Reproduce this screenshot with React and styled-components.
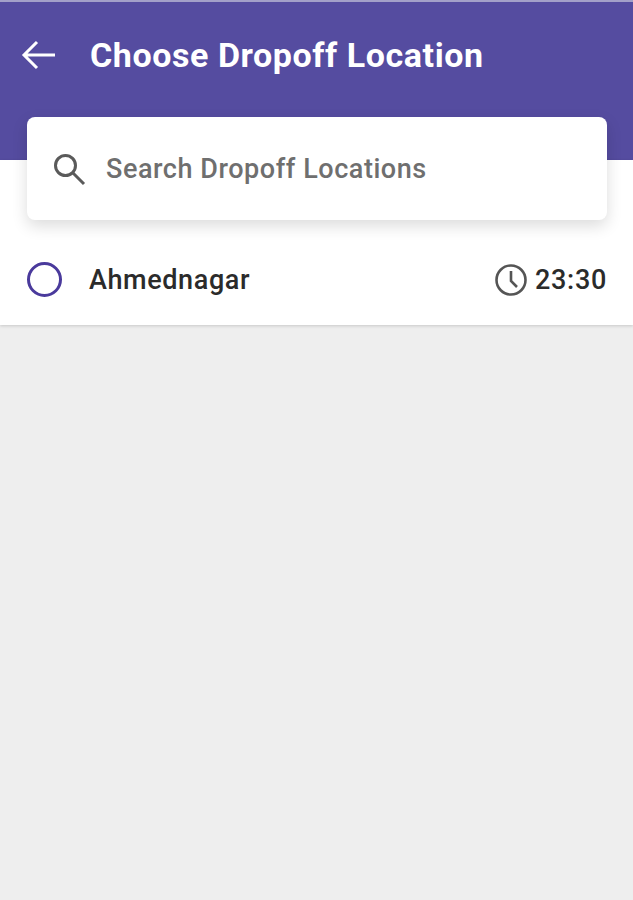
import React from 'react';
import styled, { createGlobalStyle } from 'styled-components';

const GlobalStyle = createGlobalStyle`
  html, body {
    margin: 0;
    padding: 0;
    background: #eeeeee;
    font-family: Roboto, "Liberation Sans", sans-serif;
  }
`;

const Page = styled.div`
  width: 633px;
  height: 900px;
  overflow: hidden;
  background: #eeeeee;
`;

const Header = styled.header`
  height: 158px;
  border-top: 2px solid #a3a0c9;
  background: #554ca0;
`;

const TitleRow = styled.div`
  display: flex;
  align-items: center;
  height: 106px;
  padding-left: 21px;
`;

const BackIcon = styled.svg`
  width: 36px;
  height: 32px;
  margin-right: 33px;
  flex: none;
`;

const Title = styled.h1`
  margin: 0;
  color: #ffffff;
  font-size: 34px;
  line-height: 40px;
  font-weight: 700;
  letter-spacing: 0.57px;
  white-space: nowrap;
`;

const Content = styled.section`
  display: flex;
  flex-direction: column;
  height: 165px;
  padding: 0 26px 0 27px;
  background: #ffffff;
  box-shadow: 0 1px 3px rgba(0, 0, 0, 0.16);
`;

const SearchCard = styled.div`
  display: flex;
  align-items: center;
  flex: none;
  height: 103px;
  margin-top: -43px;
  padding-left: 25px;
  background: #ffffff;
  border-radius: 8px;
  box-shadow: 0 6px 16px rgba(0, 0, 0, 0.14);
`;

const SearchIcon = styled.svg`
  width: 34px;
  height: 34px;
  margin-right: 20px;
  flex: none;
`;

const SearchText = styled.span`
  color: #6f6f6f;
  font-size: 27px;
  font-weight: 500;
  letter-spacing: 0.55px;
`;

const LocationRow = styled.div`
  display: flex;
  flex: 1;
  align-items: center;
  justify-content: space-between;
  padding-top: 14px;
`;

const Place = styled.div`
  display: flex;
  align-items: center;
  gap: 27px;
`;

const Radio = styled.span`
  width: 35px;
  height: 35px;
  box-sizing: border-box;
  border: 3px solid #4a3a9c;
  border-radius: 50%;
`;

const PlaceName = styled.span`
  color: #2b2b2b;
  font-size: 27px;
  font-weight: 500;
  letter-spacing: 0.6px;
`;

const Time = styled.div`
  display: flex;
  align-items: center;
  gap: 7px;
  color: #2b2b2b;
  font-size: 27px;
  font-weight: 500;
  letter-spacing: 0.7px;
`;

const ClockIcon = styled.svg`
  width: 34px;
  height: 34px;
  flex: none;
`;

export default function App() {
  return (
    <Page>
      <GlobalStyle />
      <Header>
        <TitleRow>
          <BackIcon viewBox="0 0 36 32" fill="none" stroke="#ffffff" strokeWidth="3">
            <path d="M34 16H4M16 3L3 16l13 13" />
          </BackIcon>
          <Title>Choose Dropoff Location</Title>
        </TitleRow>
      </Header>
      <Content>
        <SearchCard>
          <SearchIcon viewBox="0 0 34 34" fill="none" stroke="#5a5a5a" strokeWidth="3">
            <circle cx="13.5" cy="13.5" r="10" />
            <path d="M21 21l11 11" />
          </SearchIcon>
          <SearchText>Search Dropoff Locations</SearchText>
        </SearchCard>
        <LocationRow>
          <Place>
            <Radio />
            <PlaceName>Ahmednagar</PlaceName>
          </Place>
          <Time>
            <ClockIcon viewBox="0 0 34 34" fill="none" stroke="#555555" strokeWidth="2.6">
              <circle cx="17" cy="17" r="14.5" />
              <path d="M17 8v10l6 6" />
            </ClockIcon>
            23:30
          </Time>
        </LocationRow>
      </Content>
    </Page>
  );
}
